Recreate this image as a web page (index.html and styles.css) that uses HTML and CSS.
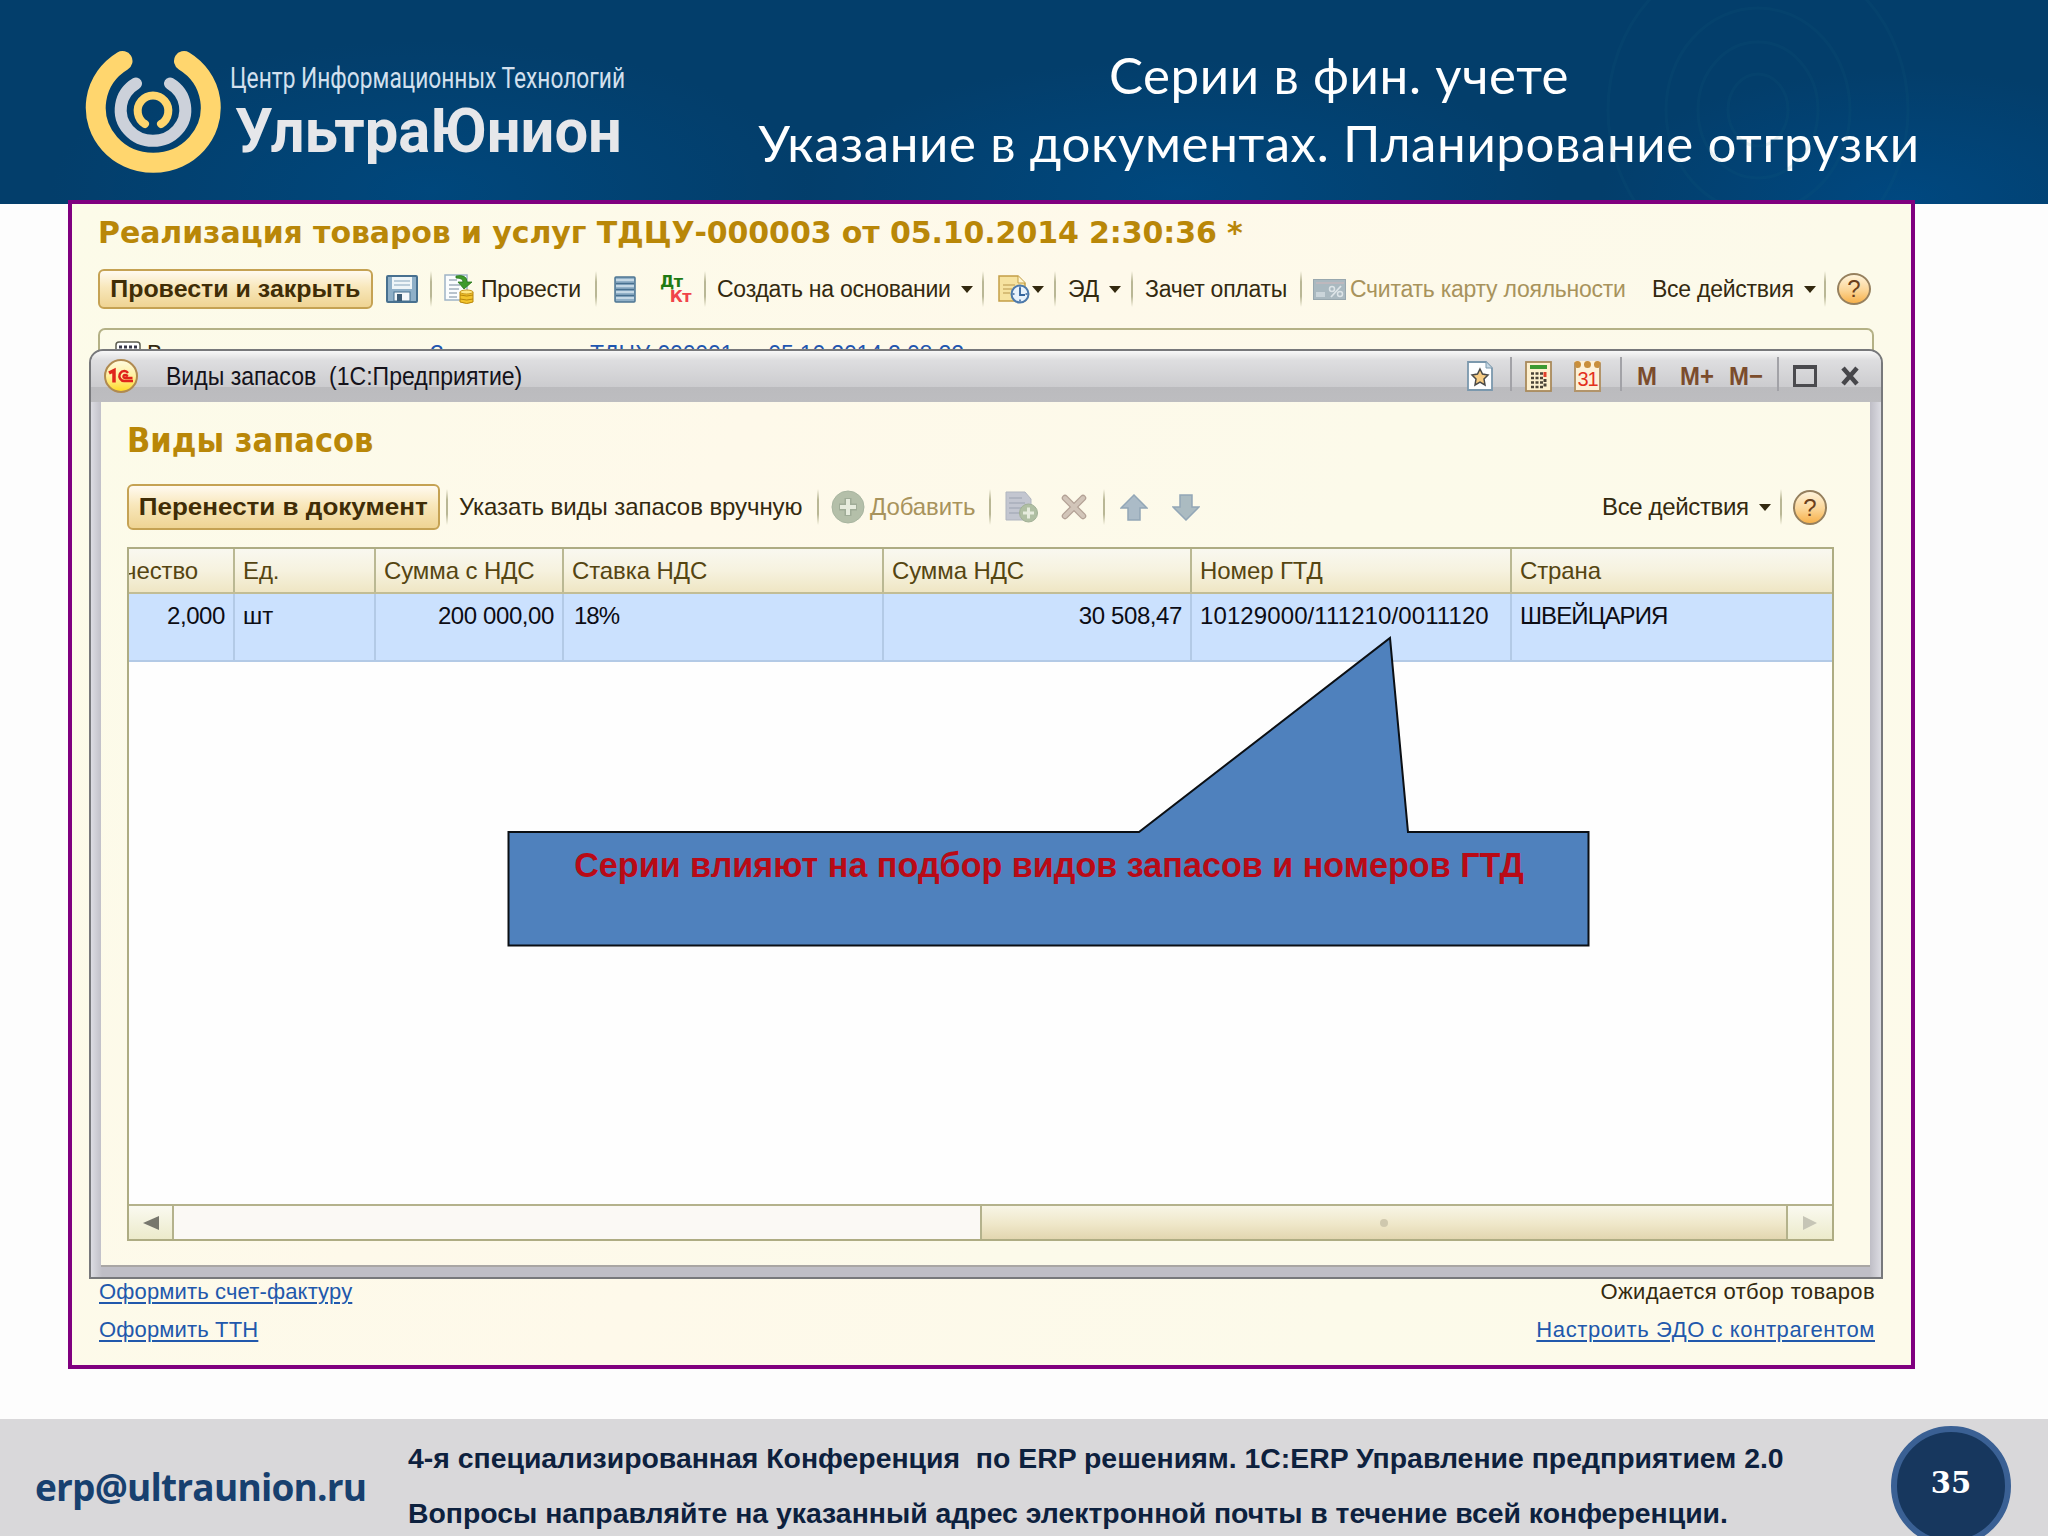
FILE: index.html
```html
<!DOCTYPE html>
<html lang="ru">
<head>
  <meta charset="UTF-8">
  <title>Серии в фин. учете</title>
  <link rel="stylesheet" href="styles.css">
</head>
<body>
  <div class="slide">
    <header class="header">
      <svg class="rings" width="420" height="204" viewBox="0 0 420 204" fill="none" stroke="#1a6a80" stroke-width="3">
        <ellipse cx="190" cy="110" rx="30" ry="36"/>
        <ellipse cx="190" cy="110" rx="60" ry="68"/>
        <ellipse cx="190" cy="110" rx="92" ry="102"/>
        <ellipse cx="190" cy="110" rx="150" ry="160"/>
      </svg>
      <svg class="logo" width="140" height="130" viewBox="83 48 140 130" fill="none" stroke-linecap="round">
        <path d="M122.500 61A57.500 55.200 0 1 0 184 61" stroke="#ffd66e" stroke-width="20"/>
        <path d="M136 83.500A32.300 31 0 1 0 170 83.500" stroke="#ccd1da" stroke-width="12"/>
        <path d="M145 124A15.300 15.400 0 1 1 161 124" stroke="#ffd66e" stroke-width="8"/>
      </svg>
      <div class="brand">
        <div class="brand-sub"><span>Центр Информационных Технологий</span></div>
        <div class="brand-name"><span>УльтраЮнион</span></div>
      </div>
      <h1>Серии в фин. учете<br>Указание в документах. Планирование отгрузки</h1>
    </header>

    <main class="shot">
      <h2 class="doc-title">Реализация товаров и услуг ТДЦУ-000003 от 05.10.2014 2:30:36 *</h2>

      <div class="toolbar toolbar-doc">
        <button class="btn btn-post"><span>Провести и закрыть</span></button>
        <svg width="32" height="28" viewBox="0 0 32 28">
          <rect x="1" y="1" width="30" height="26" rx="1" fill="#8fb0c8" stroke="#47708f" stroke-width="2"/>
          <rect x="6" y="2" width="20" height="12" fill="#eef5f8"/>
          <path d="M8 6h16M8 10h16" stroke="#a9c0cf" stroke-width="1.500"/>
          <rect x="8" y="17" width="16" height="9" fill="#f4f8fa" stroke="#47708f"/>
          <rect x="11" y="19" width="5" height="7" fill="#3d5c76"/>
        </svg>
        <i class="sep"></i>
        <svg width="33" height="30" viewBox="0 0 33 30">
          <rect x="1" y="1" width="22" height="25" fill="#fbfdfe" stroke="#9fb4c6" stroke-width="1.500"/>
          <path d="M5 6h8M5 11h11M5 15h10M5 19h8M5 23h8" stroke="#a3b0bd" stroke-width="1.500"/>
          <path d="M12 2q11-2 11 6h5l-8 7-6-7h5q0-4-7-4z" fill="#3f9a2c" stroke="#27761b" stroke-width=".8"/>
          <path d="M16 18h13v10q-6 3-13 0z" fill="#f3c42c" stroke="#b8860b"/>
          <path d="M16 21q7 2 13 0M16 25q7 2 13 0" fill="none" stroke="#b8860b"/>
          <ellipse cx="22.500" cy="18" rx="6.500" ry="2" fill="#ffe782" stroke="#c9971a"/>
        </svg>
        <span class="t">Провести</span>
        <i class="sep"></i>
        <svg width="22" height="27" viewBox="0 0 22 27">
          <rect x="1" y="1" width="20" height="25" rx="1" fill="#92b1c8" stroke="#4d7592" stroke-width="1.500"/>
          <path d="M2 4h18M2 10h18M2 16h18M2 22h18" stroke="#c5d8e5" stroke-width="2"/>
          <path d="M2 7.500h18M2 13.500h18M2 19.500h18" stroke="#47708f" stroke-width="1.500"/>
        </svg>
        <span class="dtkt"><b class="dt">Дт</b><b class="kt">Кт</b></span>
        <i class="sep"></i>
        <span class="t">Создать на основании<i class="caret"></i></span>
        <i class="sep"></i>
        <span class="t icon-drop">
          <svg width="32" height="30" viewBox="0 0 32 30">
            <path d="M1 2h19l7 7v18H1z" fill="#f6e3a0" stroke="#c39f47" stroke-width="1.500"/>
            <path d="M20 2v7h7" fill="#fff6d2" stroke="#c39f47"/>
            <path d="M5 11h12M5 15h9M5 19h7" stroke="#cdb168" stroke-width="1.500"/>
            <circle cx="22" cy="20" r="8.500" fill="#e8f2fc" stroke="#4c79ab" stroke-width="2"/>
            <path d="M22 14v7h5" fill="none" stroke="#33649c" stroke-width="1.800"/>
            <path d="M22 12.500v2M22 25.500v2M14.500 20h2M27.500 20h2" stroke="#33649c" stroke-width="1.500"/>
          </svg><i class="caret"></i>
        </span>
        <i class="sep"></i>
        <span class="t">ЭД<i class="caret"></i></span>
        <i class="sep"></i>
        <span class="t">Зачет оплаты</span>
        <i class="sep"></i>
        <svg width="33" height="21" viewBox="0 0 33 21">
          <rect x=".500" y=".500" width="32" height="20" fill="#aab9c0" stroke="#98a7ae"/>
          <path d="M3 4h28" stroke="#c5b9bd" stroke-width="1.500"/>
          <rect x="3" y="13" width="9" height="5" fill="#cbd5da"/>
          <path d="M18 18L28 7" stroke="#dde4e7" stroke-width="1.800"/>
          <circle cx="19" cy="10" r="2.500" fill="none" stroke="#dde4e7" stroke-width="1.500"/>
          <circle cx="27" cy="15" r="2.500" fill="none" stroke="#dde4e7" stroke-width="1.500"/>
        </svg>
        <span class="t off">Считать карту лояльности</span>
        <span class="t">Все действия<i class="caret"></i></span>
        <i class="sep"></i>
        <span class="help">?</span>
      </div>

      <div class="group">
        <svg width="26" height="20" viewBox="0 0 26 20">
          <rect x="1" y="1" width="24" height="24" rx="3" fill="#fff" stroke="#5d5d50" stroke-width="1.500"/>
          <path d="M4 6h18M4 10h18" stroke="#39394a" stroke-width="3" stroke-dasharray="3 2"/>
        </svg>
        <span class="g-label">В</span>
        <span class="g-link">Заказ клиента</span>
        <span class="g-num">ТДЦУ-000001 от 05.10.2014 2:08:22</span>
      </div>

      <section class="window">
        <div class="titlebar">
          <svg width="34" height="34" viewBox="0 0 34 34">
            <defs>
              <linearGradient id="gold" x1="0" y1="0" x2="0" y2="1">
                <stop offset="0" stop-color="#fffbe0"/><stop offset=".5" stop-color="#fff0a0"/><stop offset="1" stop-color="#ffd91f"/>
              </linearGradient>
            </defs>
            <circle cx="17" cy="17" r="16" fill="url(#gold)" stroke="#b08a50" stroke-width="2"/>
            <path d="M5 14l5-2.500v12" fill="none" stroke="#e0241b" stroke-width="3.500"/>
            <path d="M24 14q-2-3-6-1.500q-4 3-2 7q2 3 5 2.500h8M24 17q-4-2-4.500 0t2 2h7" fill="none" stroke="#e0241b" stroke-width="2.400"/>
          </svg>
          <span class="window-name">Виды запасов&nbsp; (1С:Предприятие)</span>
          <svg width="26" height="30" viewBox="0 0 26 30">
            <path d="M1 1h18l6 6v22H1z" fill="#fdfeff" stroke="#7b98ad" stroke-width="1.800"/>
            <path d="M19 1v6h6" fill="#c7d8e4" stroke="#7b98ad"/>
            <path d="M13 8l2.500 5 5.500 1-4 4 1 6-5-3-5 3 1-6-4-4 5.500-1z" fill="#f8cd84" stroke="#4b4a48" stroke-width="1.500"/>
          </svg>
          <i class="bar"></i>
          <svg width="27" height="31" viewBox="0 0 27 31">
            <rect x="1" y="1" width="25" height="29" fill="#fdf0cf" stroke="#a98a5b" stroke-width="1.800"/>
            <rect x="5" y="4" width="17" height="4" fill="#3d9a32"/>
            <path d="M6 12.500h12M6 17h12M6 21.500h12M6 26h12" stroke="#4a4338" stroke-width="2.600" stroke-dasharray="3 1.500"/>
            <path d="M20 11v5" stroke="#e0402c" stroke-width="3"/>
            <path d="M20 18v9" stroke="#4a4338" stroke-width="3" stroke-dasharray="3 1.500"/>
          </svg>
          <span class="calendar">31</span>
          <i class="bar"></i>
          <b class="mem">M</b>
          <b class="mem">M+</b>
          <b class="mem">M−</b>
          <i class="bar"></i>
          <i class="maximize"></i>
          <svg width="20" height="20" viewBox="0 0 20 20"><path d="M3 2l14 16M17 2L3 18" stroke="#47474b" stroke-width="4.500"/></svg>
        </div>

        <div class="window-body">
          <h3>Виды запасов</h3>

          <div class="toolbar toolbar-list">
            <button class="btn btn-move"><span>Перенести в документ</span></button>
            <i class="sep"></i>
            <span class="t">Указать виды запасов вручную</span>
            <i class="sep"></i>
            <svg width="34" height="34" viewBox="0 0 34 34">
              <circle cx="17" cy="17" r="16" fill="#b4bfa9" stroke="#a8b5a0"/>
              <path d="M17 8v18M8 17h18" stroke="#9fac97" stroke-width="7"/>
              <path d="M17 9v16M9 17h16" stroke="#e6ebdd" stroke-width="4"/>
            </svg>
            <span class="t off">Добавить</span>
            <i class="sep"></i>
            <svg width="34" height="32" viewBox="0 0 34 32">
              <path d="M1 1h19l6 7v21H1z" fill="#c3c6d0" stroke="#b0b5bf"/>
              <path d="M4 7h13M4 12h16M4 17h14M4 22h12" stroke="#a9aebb" stroke-width="1.500"/>
              <circle cx="23.500" cy="22" r="9" fill="#b0bfa3" stroke="#a1b096"/>
              <path d="M23.500 16.500v11M18 22h11" stroke="#e6ebdd" stroke-width="3"/>
            </svg>
            <svg width="26" height="26" viewBox="0 0 26 26" stroke-linecap="round">
              <path d="M4 4l18 18M22 4L4 22" stroke="#b3a195" stroke-width="6.500"/>
              <path d="M4 4l18 18M22 4L4 22" stroke="#d2c5b9" stroke-width="4"/>
            </svg>
            <i class="sep"></i>
            <svg width="28" height="27" viewBox="0 0 28 27"><path d="M14 1l13 13h-7v12H8V14H1z" fill="#abbbc7" stroke="#93a7b7" stroke-width="1.500"/></svg>
            <svg width="28" height="27" viewBox="0 0 28 27"><path d="M14 26l13-13h-7V1H8v12H1z" fill="#abbbc1" stroke="#93a7b7" stroke-width="1.500"/></svg>
            <span class="t t-all">Все действия<i class="caret"></i></span>
            <i class="sep"></i>
            <span class="help help-tall">?</span>
          </div>

          <div class="table">
            <div class="row head">
              <div class="cut"><span>чество</span></div>
              <div>Ед.</div>
              <div>Сумма с НДС</div>
              <div>Ставка НДС</div>
              <div>Сумма НДС</div>
              <div>Номер ГТД</div>
              <div>Страна</div>
            </div>
            <div class="row data">
              <div class="num">2,000</div>
              <div>шт</div>
              <div class="num">200 000,00</div>
              <div class="rate">18%</div>
              <div class="num">30 508,47</div>
              <div class="gtd">10129000/111210/0011120</div>
              <div class="country">ШВЕЙЦАРИЯ</div>
            </div>
            <div class="empty"></div>
            <div class="scroll">
              <div class="scroll-btn"><svg width="16" height="16" viewBox="0 0 16 16"><path d="M0 8L16 1v14z" fill="#77776d"/></svg></div>
              <div class="track"></div>
              <div class="thumb"><i></i></div>
              <div class="scroll-btn"><svg width="16" height="16" viewBox="0 0 16 16"><path d="M15 8L1 1v14z" fill="#c6c5b6"/></svg></div>
            </div>
          </div>
        </div>
      </section>

      <div class="links">
        <a>Оформить счет-фактуру</a>
        <span class="wait">Ожидается отбор товаров</span>
      </div>
      <div class="links">
        <a>Оформить ТТН</a>
        <a class="edo">Настроить ЭДО с контрагентом</a>
      </div>
    </main>

    <div class="callout">
      <svg width="1084" height="312" viewBox="0 0 1084 312">
        <path d="M1.500 196H632L883 2L901 196H1081.500V309.500H1.500Z" fill="#4f81bd" stroke="#0b0f14" stroke-width="2"/>
      </svg>
      <p>Серии влияют на подбор видов запасов и номеров ГТД</p>
    </div>

    <footer class="footer">
      <div class="email">erp@ultraunion.ru</div>
      <div class="notes">
        <p>4-я специализированная Конференция&nbsp; по ERP решениям. 1С:ERP Управление предприятием 2.0</p>
        <p>Вопросы направляйте на указанный адрес электронной почты в течение всей конференции.</p>
      </div>
      <div class="page-no">35</div>
    </footer>
  </div>
</body>
</html>
```
FILE: styles.css
```css
* {
  box-sizing: border-box;
}
body {
  margin: 0;
  background: #fdfdfd;
  font-family: "Liberation Sans", Arial, sans-serif;
}
h1, h2, h3, p {
  margin: 0;
}
svg {
  display: block;
}
.slide {
  position: relative;
  width: 2048px;
  height: 1536px;
  overflow: hidden;
  display: flex;
  flex-direction: column;
}

/* header */
.header {
  position: relative;
  height: 204px;
  flex: none;
  display: flex;
  padding-left: 83px;
  color: #fff;
  background:
    radial-gradient(ellipse 380px 150px at 430px 190px, #00477c, transparent),
    radial-gradient(ellipse 380px 130px at 1180px 190px, #00487e, transparent),
    radial-gradient(ellipse 300px 130px at 1900px 200px, #004880, transparent),
    #033e6b;
}
.rings {
  position: absolute;
  right: 60px;
  top: 0;
  opacity: 0.1;
}
.logo {
  margin-top: 48px;
  flex: none;
}
.brand {
  width: 420px;
  padding-left: 7px;
  white-space: nowrap;
}
.brand span {
  display: inline-block;
  transform-origin: left;
}
.brand-sub {
  margin-top: 58px;
  height: 40px;
  font: 400 30px/40px Roboto, sans-serif;
  color: #d3e0ee;
}
.brand-sub span {
  transform: scaleX(0.757);
}
.brand-name {
  height: 72px;
  margin-top: -3px;
  padding-left: 5px;
  font: 700 62px/72px Roboto, sans-serif;
  color: #e6e7ea;
}
.brand-name span {
  transform: scaleX(0.963);
}
h1 {
  width: 1392px;
  padding-top: 41px;
  text-align: center;
  font: 400 51px/68px Lato, "Open Sans", sans-serif;
  letter-spacing: 0.62px;
  white-space: nowrap;
}

/* framed program picture */
.shot {
  width: 1847px;
  height: 1169px;
  flex: none;
  margin: -4px 0 0 68px;
  position: relative;
  border: 4px solid #80007f;
  background: linear-gradient(115deg, #fcfbe9, #fef9ea 45%, #fcfaea 75%, #fdfaea);
  padding-left: 26px;
  color: #33290f;
}
.doc-title {
  height: 50px;
  padding-top: 9px;
  font: bold 30px/40px "DejaVu Sans", sans-serif;
  letter-spacing: -0.1px;
  color: #b98708;
  white-space: nowrap;
}
.toolbar {
  display: grid;
  align-items: center;
  white-space: nowrap;
}
.toolbar-doc {
  height: 70px;
  grid-template-columns: 288px 44px 14px 37px 114px 19px 46px 44px 13px 265px 16px 56px 14px 63px 14px 155px 13px 37px 302px 172px 13px 37px;
  font-size: 23px;
  letter-spacing: -0.25px;
}
.btn {
  justify-self: start;
  padding: 0;
  border: 2px solid #c5a253;
  border-radius: 6px;
  background: linear-gradient(#fffaf0, #f8e7bb 45%, #efd493);
  font: bold 23px "Liberation Sans", Arial, sans-serif;
  color: #402d06;
  text-align: center;
}
.btn span {
  display: inline-block;
  transform: scaleX(1.085);
}
.btn-post {
  width: 275px;
  height: 40px;
}
.btn-move {
  width: 313px;
  height: 46px;
  font-size: 24px;
}
.sep {
  width: 2px;
  height: 36px;
  background: linear-gradient(transparent, #b9b795 30%, #b9b795 70%, transparent);
}
.t {
  display: flex;
  align-items: center;
}
.off {
  color: #a8935c;
}
.caret {
  margin-left: 10px;
  border: 6px solid transparent;
  border-top: 7px solid #33290f;
  border-bottom: 0;
}
.icon-drop .caret {
  margin-left: 2px;
}
.dtkt {
  display: flex;
  flex-direction: column;
  width: 31px;
  font: bold 16px/15px "DejaVu Sans", sans-serif;
  letter-spacing: -0.5px;
}
.dt {
  color: #1f7a12;
}
.kt {
  color: #f0444a;
  align-self: flex-end;
}
.help {
  width: 34px;
  height: 32px;
  border: 2px solid #96805e;
  border-radius: 50%;
  background: linear-gradient(#fff3da, #fbd596 55%, #f7b14b);
  font: 24px/28px "Liberation Sans", Arial, sans-serif;
  letter-spacing: 0;
  text-align: center;
  color: #6b3f1c;
}
.help-tall {
  height: 35px;
  line-height: 31px;
}
.group {
  display: flex;
  align-items: flex-start;
  width: 1776px;
  height: 22px;
  margin-top: 4px;
  padding: 11px 0 0 15px;
  border: 2px solid #b4b186;
  border-bottom: 0;
  border-radius: 7px 7px 0 0;
  overflow: hidden;
  font-size: 23px;
  line-height: 26px;
  white-space: nowrap;
}
.g-label {
  width: 289px;
  padding-left: 6px;
}
.g-link {
  width: 160px;
}
.g-link, .g-num {
  color: #1f56b0;
}
.g-num {
  letter-spacing: -0.15px;
}

/* modal window */
.window {
  width: 1794px;
  height: 930px;
  margin: -1px 0 0 -9px;
  position: relative;
  border: 2px solid #77787b;
  border-radius: 14px 14px 0 0;
  background: linear-gradient(90deg, #dcdce2, #bfbec6 11px, #bfbec6 1779px, #dcdce2);
}
.titlebar {
  display: grid;
  grid-template-columns: 62px 1301px 43px 15px 49px 46px 17px 43px 49px 48px 16px 47px 22px;
  align-items: center;
  height: 51px;
  padding: 0 0 1px 13px;
  border-radius: 12px 12px 0 0;
  background: linear-gradient(#f8f8f8, #dedee0 18%, #cccccf 70%, #bbbbbe 71%, #bdbdc0);
  color: #14121a;
}
.window-name {
  justify-self: start;
  font-size: 25px;
  white-space: nowrap;
  transform: scaleX(0.922);
  transform-origin: left;
}
.bar {
  align-self: start;
  width: 2px;
  height: 34px;
  margin-top: 6px;
  background: #a2a2a7;
}
.calendar {
  width: 27px;
  height: 31px;
  border: 2px solid #b2946a;
  border-top: 7px dotted #c98f3c;
  background: #fdf1d8;
  font: 20px/22px "Liberation Sans", Arial, sans-serif;
  letter-spacing: -1px;
  color: #e3301c;
  text-align: center;
}
.mem {
  font-size: 26px;
  line-height: 30px;
  color: #7b4c2c;
  justify-self: start;
  transform: scaleX(0.92);
  transform-origin: left;
}
.maximize {
  width: 24px;
  height: 22px;
  border: 3px solid #4a4a4e;
  border-top-width: 4px;
}
.window-body {
  width: 1769px;
  height: 865px;
  margin-left: 10px;
  padding-left: 26px;
  border-bottom: 2px solid #a9a6a4;
  background: linear-gradient(115deg, #fcfbe9, #fef9ea 30%, #fcfaea 60%, #fdfaea);
}
h3 {
  height: 76px;
  padding-top: 16px;
  font: bold 34px/44px "DejaVu Sans Condensed", "DejaVu Sans", sans-serif;
  color: #b98708;
  white-space: nowrap;
}
.toolbar-list {
  height: 58px;
  grid-template-columns: 319px 13px 358px 14px 39px 119px 16px 56px 42px 17px 52px 430px 178px 13px 35px;
  font-size: 24px;
  letter-spacing: -0.08px;
}
.t-all {
  letter-spacing: -0.35px;
}
.table {
  width: 1707px;
  height: 694px;
  margin-top: 11px;
  border: 2px solid #aeac83;
  background: #fefefe;
  display: flex;
  flex-direction: column;
  font-size: 24px;
  white-space: nowrap;
}
.row {
  display: grid;
  grid-template-columns: 106px 141px 188px 320px 308px 320px 320px;
}
.row > div {
  padding: 0 8px;
  border-right: 2px solid #bab893;
}
.row > div:last-child {
  border-right: 0;
}
.head {
  height: 45px;
  line-height: 43px;
  letter-spacing: -0.1px;
  border-bottom: 2px solid #c2bd95;
  background: linear-gradient(#f9f8f0, #f6f2df 50%, #efe6c4);
  color: #554511;
}
.head .cut {
  padding: 0;
  overflow: hidden;
}
.cut span {
  margin-left: -5px;
}
.data {
  height: 68px;
  line-height: 43px;
  background: #cbe1fe;
  border-bottom: 2px solid #b3cae6;
  color: #0c0c14;
}
.data > div {
  border-color: #b3cae6;
}
.num {
  text-align: right;
  letter-spacing: -0.4px;
}
.data .rate {
  padding-left: 10px;
  letter-spacing: -1px;
}
.gtd {
  letter-spacing: 0.1px;
}
.country {
  letter-spacing: -0.9px;
}
.empty {
  flex: 1;
}
.scroll {
  display: grid;
  grid-template-columns: 45px 808px 806px 44px;
  height: 35px;
  border-top: 2px solid #b4b28c;
}
.scroll-btn {
  display: flex;
  align-items: center;
  justify-content: center;
  background: linear-gradient(#fafaf0, #eceacb);
}
.scroll-btn:first-child, .track, .thumb {
  border-right: 2px solid #b4b28c;
}
.track {
  background: #fbf9f5;
}
.thumb {
  display: flex;
  align-items: center;
  justify-content: center;
  background: linear-gradient(#f8f5e6, #efe7c9 55%, #e2d6b0);
}
.thumb i {
  width: 8px;
  height: 8px;
  border-radius: 50%;
  background: #cfc8ae;
}
.links {
  display: flex;
  justify-content: space-between;
  width: 1777px;
  height: 38px;
  padding-left: 1px;
  font-size: 22px;
  line-height: 26px;
  letter-spacing: 0.15px;
  white-space: nowrap;
}
.links a {
  color: #2158ac;
  text-decoration: underline;
  text-decoration-thickness: 2px;
  text-underline-offset: 3px;
}
.links .wait {
  letter-spacing: 0.35px;
}
.links .edo {
  letter-spacing: 0.6px;
}

/* callout over the table */
.callout {
  position: absolute;
  left: 507px;
  top: 636px;
  width: 1084px;
}
.callout p {
  position: absolute;
  top: 209px;
  width: 100%;
  text-align: center;
  font-size: 34.15px;
  line-height: 40px;
  font-weight: bold;
  color: #b90a16;
  white-space: nowrap;
}

/* footer */
.footer {
  height: 117px;
  margin-top: auto;
  display: flex;
  position: relative;
  background: #d9d8da;
  white-space: nowrap;
}
.email {
  width: 408px;
  padding: 44px 0 0 35px;
  font: bold 37px/48px "Open Sans", sans-serif;
  letter-spacing: -0.8px;
  color: #17406f;
}
.notes {
  width: 1483px;
  padding-top: 12px;
  font-size: 28.4px;
  font-weight: bold;
  line-height: 55px;
  color: #0d213e;
}
.page-no {
  width: 120px;
  height: 120px;
  margin-top: 7px;
  border: 6px solid #3a6094;
  border-radius: 50%;
  background: #17375e;
  color: #fff;
  font: bold 29px/102px "DejaVu Serif", serif;
  text-align: center;
}
```
